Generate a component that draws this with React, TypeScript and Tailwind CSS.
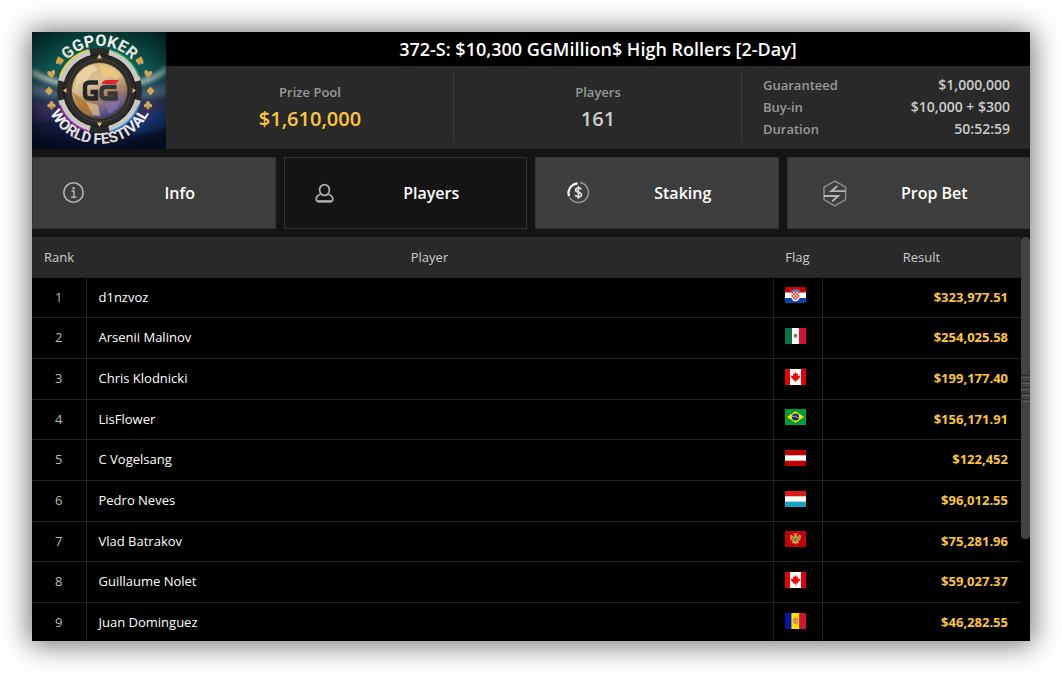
import type { ReactNode } from "react";

type FlagCode = "hr" | "mx" | "ca" | "br" | "at" | "lu" | "me" | "ad";

type Result = { rank: number; player: string; flag: FlagCode; country: string; prize: string };

const results: Result[] = [
  { rank: 1, player: "d1nzvoz", flag: "hr", country: "Croatia", prize: "$323,977.51" },
  { rank: 2, player: "Arsenii Malinov", flag: "mx", country: "Mexico", prize: "$254,025.58" },
  { rank: 3, player: "Chris Klodnicki", flag: "ca", country: "Canada", prize: "$199,177.40" },
  { rank: 4, player: "LisFlower", flag: "br", country: "Brazil", prize: "$156,171.91" },
  { rank: 5, player: "C Vogelsang", flag: "at", country: "Austria", prize: "$122,452" },
  { rank: 6, player: "Pedro Neves", flag: "lu", country: "Luxembourg", prize: "$96,012.55" },
  { rank: 7, player: "Vlad Batrakov", flag: "me", country: "Montenegro", prize: "$75,281.96" },
  { rank: 8, player: "Guillaume Nolet", flag: "ca", country: "Canada", prize: "$59,027.37" },
  { rank: 9, player: "Juan Dominguez", flag: "ad", country: "Andorra", prize: "$46,282.55" },
];

const details = [
  { label: "Guaranteed", value: "$1,000,000" },
  { label: "Buy-in", value: "$10,000 + $300" },
  { label: "Duration", value: "50:52:59" },
];

export default function App() {
  return (
    <main className="flex h-screen flex-col overflow-hidden bg-white p-8 font-['Open_Sans',sans-serif]">
      <div className="flex min-h-0 flex-1 flex-col bg-[#141414] shadow-[0_1px_26px_3px_rgba(0,0,0,0.55)]">
        <Header />
        <Tabs />
        <Results />
      </div>
    </main>
  );
}

function Header() {
  return (
    <header className="flex shrink-0">
      <FestivalLogo />
      <div className="flex flex-1 flex-col">
        <h1 className="bg-black text-center text-lg leading-[34px] font-semibold text-white">
          372-S: $10,300 GGMillion$ High Rollers [2-Day]
        </h1>
        <div className="grid flex-1 grid-cols-3 border-b border-[#222222] bg-[#292929] py-[6px]">
          <Stat label="Prize Pool">
            <span className="text-[#fdc53c]">$1,610,000</span>
          </Stat>
          <Stat label="Players">
            <span className="text-[#cccccc]">161</span>
          </Stat>
          <dl className="flex flex-col justify-center pr-5 pl-[21px] text-sm font-semibold">
            {details.map((item) => (
              <div key={item.label} className="flex justify-between leading-[22px]">
                <dt className="text-[13px] text-[#999999]">{item.label}</dt>
                <dd className="text-[#cccccc]">{item.value}</dd>
              </div>
            ))}
          </dl>
        </div>
      </div>
    </header>
  );
}

function Stat({ label, children }: { label: string; children: ReactNode }) {
  return (
    <div className="flex flex-col items-center justify-center border-r border-[#3a3a3a] pl-px font-semibold">
      <span className="text-[13px] leading-6 text-[#999999]">{label}</span>
      <span className="text-xl leading-[30px]">{children}</span>
    </div>
  );
}

/* Tabs */

function Tabs() {
  return (
    <nav className="grid shrink-0 grid-cols-4 gap-2 py-2">
      <Tab label="Info" icon={<InfoIcon />} />
      <Tab label="Players" icon={<PlayersIcon />} active />
      <Tab label="Staking" icon={<StakingIcon />} />
      <Tab label="Prop Bet" icon={<PropBetIcon />} />
    </nav>
  );
}

function Tab({ label, icon, active = false }: { label: string; icon: ReactNode; active?: boolean }) {
  return (
    <button
      type="button"
      aria-pressed={active}
      className={
        active
          ? "flex h-[72px] items-center border border-[#333333] bg-[#141414] pr-[10px] pl-[26px]"
          : "flex h-[72px] items-center border border-[#333333] bg-[#3d3d3d] pr-[10px] pl-[26px]"
      }
    >
      {icon}
      <span className="flex-1 text-center text-base font-semibold text-white">{label}</span>
    </button>
  );
}

function InfoIcon() {
  return (
    <svg viewBox="0 0 36 28" className="h-7 w-9 shrink-0" fill="none" stroke="#b5b5b5" aria-hidden>
      <circle cx="14.5" cy="13.5" r="9.7" strokeWidth="1.6" />
      <path d="M12.5 12H15V18M12 18.2H17.5" strokeWidth="1.4" />
      <circle cx="14.6" cy="9.2" r="1.2" fill="#b5b5b5" stroke="none" />
    </svg>
  );
}

function PlayersIcon() {
  return (
    <svg viewBox="0 0 36 28" className="h-7 w-9 shrink-0" fill="none" stroke="#b0b0b0" strokeWidth="1.7" aria-hidden>
      <ellipse cx="13.5" cy="11" rx="4.9" ry="5.4" />
      <path d="M9.6 15.3C6.8 16.3 5.2 18 5.2 20.3Q5.2 22.6 7.7 22.6H19.3Q21.8 22.6 21.8 20.3C21.8 18 20.2 16.3 17.4 15.3" />
      <path d="M7 22.3H20" strokeWidth="2.2" />
    </svg>
  );
}

function StakingIcon() {
  return (
    <svg viewBox="0 0 36 28" className="h-7 w-9 shrink-0" fill="none" aria-hidden>
      <path d="M18 3.6A10 10 0 1 1 7.8 18.6" stroke="#999999" strokeWidth="1.5" />
      <path d="M7 17.2A10 10 0 0 1 15.6 4.3" stroke="#ffffff" strokeWidth="2.2" />
      <path
        d="M19.2 10.4C18.6 9.2 17.6 8.9 16.4 8.9C14.8 8.9 13.6 9.7 13.6 11C13.6 12.4 14.8 12.9 16.4 13.3C18.1 13.7 19.4 14.2 19.4 15.7C19.4 17.2 18.1 17.9 16.5 17.9C15 17.9 13.7 17.3 13.2 16M16.4 7V19.7"
        stroke="#e0e0e0"
        strokeWidth="1.7"
      />
    </svg>
  );
}

function PropBetIcon() {
  return (
    <svg viewBox="0 0 36 28" className="h-7 w-9 shrink-0" fill="none" aria-hidden>
      <path d="M20.8 2L31.6 8.2V20.6L20.8 26.8L10 20.6V8.2Z" stroke="#8c8c8c" strokeWidth="1.5" />
      <path d="M31.6 12.1H17.4L23.4 7M10 17H24.2L18.2 22.2" stroke="#b4b4b4" strokeWidth="1.9" />
    </svg>
  );
}

/* Results table */

function Results() {
  return (
    <div className="flex min-h-0 flex-1 overflow-hidden bg-black">
      <table className="mb-auto flex-1 table-fixed border-collapse text-[13px]">
        <colgroup>
          <col className="w-[54px]" />
          <col />
          <col className="w-[49px]" />
          <col className="w-[199px]" />
        </colgroup>
        <thead>
          <tr className="h-10 bg-[#292929] text-[#cccccc]">
            <th scope="col" className="pt-px font-normal">Rank</th>
            <th scope="col" className="pt-px font-normal">Player</th>
            <th scope="col" className="pt-px font-normal">Flag</th>
            <th scope="col" className="pt-px font-normal">Result</th>
          </tr>
        </thead>
        <tbody>
          {results.map((row) => (
            <tr key={row.rank} className="h-[41px] border-y border-[#222222] nth-[3n+1]:h-[40px]">
              <td className="border-r border-[#222222] pt-px text-center text-[#bbbbbb]">{row.rank}</td>
              <td className="pt-px pl-3 font-medium text-white">{row.player}</td>
              <td className="border-x border-[#222222] pr-1 pb-1">
                <Flag code={row.flag} title={row.country} />
              </td>
              <td className="pt-px pr-[13px] text-right font-bold text-[#fdc53c]">{row.prize}</td>
            </tr>
          ))}
        </tbody>
      </table>
      <div className="w-[9px] shrink-0">
        <div className="flex h-[302px] flex-col items-stretch justify-center gap-[3px] rounded-[4px] bg-[#424242]">
          {[0, 1, 2, 3, 4].map((n) => (
            <div key={n} className="h-[3px] border-t border-b border-t-[#2c2c2c] border-b-[#5c5c5c]" />
          ))}
        </div>
      </div>
    </div>
  );
}

const flagArt: Record<FlagCode, ReactNode> = {
  hr: (
    <>
      <path fill="#c80000" d="M0 0H21V6H0Z" />
      <path fill="#ffffff" d="M0 5.5H21V11H0Z" />
      <path fill="#0b3fae" d="M0 11H21V16H0Z" />
      <path fill="#f4dede" d="M6.5 5H14.5V11Q14 14 10.5 14.5Q7 14 6.5 11Z" />
      <path
        fill="#d8342c"
        d="M6.5 5h1.6v1.6h-1.6zM9.7 5h1.6v1.6h-1.6zM12.9 5h1.6v1.6h-1.6zM8.1 6.6h1.6v1.6h-1.6zM11.3 6.6h1.6v1.6h-1.6zM6.5 8.2h1.6v1.6h-1.6zM9.7 8.2h1.6v1.6h-1.6zM12.9 8.2h1.6v1.6h-1.6zM8.1 9.8h1.6v1.6h-1.6zM11.3 9.8h1.6v1.6h-1.6zM9.7 11.4h1.6v1.6h-1.6z"
      />
      <path fill="#5c86b8" d="M6 2.5L7.6 3.3L9 2L10.5 2.8L12 2L13.4 3.3L15 2.5L14.3 5H6.7Z" />
    </>
  ),
  mx: (
    <>
      <path fill="#0a7049" d="M0 0H7V16H0Z" />
      <path fill="#ffffff" d="M7 0H14V16H7Z" />
      <path fill="#d0132b" d="M14 0H21V16H14Z" />
      <path fill="#8b6b45" d="M9 6.5Q10.5 5 12 6.5Q12.6 8 11.5 9.5H9.6Q8.4 8.5 9 6.5Z" />
      <path fill="none" stroke="#a9b98a" strokeWidth="0.7" d="M8.8 8.8Q10.5 11 12.2 8.8" />
    </>
  ),
  ca: (
    <>
      <path fill="#ffffff" d="M0 0H21V16H0Z" />
      <path fill="#e60000" d="M0 0H5V16H0ZM16 0H21V16H16Z" />
      <path
        fill="#f00000"
        d="M10.5 3L11.7 5L13 4.6L12.7 7L14.6 6.4L15 8.2L12.5 10.8L12.7 11.7L10.8 11.4V13.6H10.2V11.4L8.3 11.7L8.5 10.8L6 8.2L6.4 6.4L8.3 7L8 4.6L9.3 5Z"
      />
    </>
  ),
  br: (
    <>
      <path fill="#009b3a" d="M0 0H21V16H0Z" />
      <path fill="#fedf00" d="M10.5 2.2L19 8L10.5 13.8L2 8Z" />
      <circle fill="#1b2f7a" cx="10.5" cy="8" r="3.6" />
      <path fill="none" stroke="#dfe6ee" strokeWidth="0.7" d="M7 7.3Q10.8 6.4 13.8 9.2" />
    </>
  ),
  at: (
    <>
      <path fill="#c00000" d="M0 0H21V16H0Z" />
      <path fill="#ffffff" d="M0 5.3H21V10.7H0Z" />
    </>
  ),
  lu: (
    <>
      <path fill="#dc1c13" d="M0 0H21V6H0Z" />
      <path fill="#ffffff" d="M0 5.3H21V11H0Z" />
      <path fill="#17a2c4" d="M0 10.6H21V16H0Z" />
    </>
  ),
  me: (
    <>
      <path fill="#c40008" d="M0 0H21V16H0Z" />
      <path
        fill="#cf9b3a"
        d="M9.4 4.6L8 2.6L9.8 2.2L10.5 3.2L11.2 2.2L13 2.6L11.6 4.6L12.4 6L14.6 3.6L16 4.6L15.6 8.4L13.4 10.3L14.2 12.4L12 12L10.5 13.8L9 12L6.8 12.4L7.6 10.3L5.4 8.4L5 4.6L6.4 3.6L8.6 6Z"
      />
      <path fill="#4b7c86" d="M9.3 6.8H11.7V9.4L10.5 10.4L9.3 9.4Z" />
      <path fill="none" stroke="#a33a10" strokeWidth="0.6" d="M6.8 5.6L8.4 9.5M14.2 5.6L12.6 9.5" />
    </>
  ),
  ad: (
    <>
      <path fill="#0018a8" d="M0 0H7V16H0Z" />
      <path fill="#fedf00" d="M6.4 0H14.6V16H6.4Z" />
      <path fill="#d0103a" d="M14.4 0H21V16H14.4Z" />
      <path fill="#d08a4a" d="M8 5.4Q10.5 4 13 5.4V9.4Q12.6 11 10.5 11.6Q8.4 11 8 9.4Z" />
      <path fill="#e0b35c" d="M9 6.4H10.4V8H9ZM10.8 8.3H12V9.8H10.8Z" />
    </>
  ),
};

function Flag({ code, title }: { code: FlagCode; title: string }) {
  return (
    <svg viewBox="0 0 21 16" role="img" aria-label={title} className="mx-auto block h-4 w-[21px]">
      {flagArt[code]}
    </svg>
  );
}

/* Festival logo: poker chip around a golden globe */

const suits = {
  spade: "M0 -4.4C1.6 -2 4 -1 4 1.2C4 3 1.8 3.4 0.8 2.2L1.6 4.2H-1.6L-0.8 2.2C-1.8 3.4 -4 3 -4 1.2C-4 -1 -1.6 -2 0 -4.4Z",
  heart: "M0 4.2C-1.6 2 -4 0.8 -4 -1.6C-4 -4 -1 -4.2 0 -2C1 -4.2 4 -4 4 -1.6C4 0.8 1.6 2 0 4.2Z",
  diamond: "M0 -4.6L4 0L0 4.6L-4 0Z",
  club: "M-1.5 4.2L-0.6 1.8C-1.6 3.2 -4.2 2.6 -4.2 0.5C-4.2 -1.2 -2.6 -1.6 -1.8 -1.2C-2.8 -4.8 2.8 -4.8 1.8 -1.2C2.6 -1.6 4.2 -1.2 4.2 0.5C4.2 2.6 1.6 3.2 0.6 1.8L1.5 4.2Z",
};

function FestivalLogo() {
  return (
    <svg viewBox="0 0 134 117" className="h-[117px] w-[134px] shrink-0" role="img" aria-label="GGPoker World Festival">
      <defs>
        <linearGradient id="sky" x1="0" y1="0" x2="0" y2="1">
          <stop offset="0" stopColor="#064a3d" />
          <stop offset="0.3" stopColor="#0d5a58" />
          <stop offset="0.5" stopColor="#29435a" />
          <stop offset="0.75" stopColor="#1d2450" />
          <stop offset="1" stopColor="#050d28" />
        </linearGradient>
        <radialGradient id="edge" cx="0.5" cy="0.5" r="0.75">
          <stop offset="0.5" stopColor="#000000" stopOpacity="0" />
          <stop offset="1" stopColor="#000814" stopOpacity="0.75" />
        </radialGradient>
        <linearGradient id="globe" x1="0.3" y1="0" x2="0.75" y2="1">
          <stop offset="0" stopColor="#d8b777" />
          <stop offset="0.35" stopColor="#d9c09a" />
          <stop offset="0.6" stopColor="#a98464" />
          <stop offset="0.8" stopColor="#6d5f8c" />
          <stop offset="1" stopColor="#27306e" />
        </linearGradient>
        <linearGradient id="lettering" x1="0" y1="0" x2="0" y2="1">
          <stop offset="0" stopColor="#ffffff" />
          <stop offset="1" stopColor="#dcd6c2" />
        </linearGradient>
        <filter id="glow" x="-50%" y="-50%" width="200%" height="200%">
          <feGaussianBlur stdDeviation="2" />
        </filter>
        <path id="arc-top" d="M23.5 58A44 44 0 0 1 111.5 58" />
        <path id="arc-bottom" d="M12.5 57A55 55 0 0 0 122.5 57" />
      </defs>

      <rect width="134" height="117" fill="url(#sky)" />
      <g filter="url(#glow)">
        <path d="M0 37Q16 46 30 49V54Q12 50 0 43Z" fill="#d9e6cf" opacity="0.8" />
        <path d="M134 34Q122 45 104 49V54Q122 50 134 41Z" fill="#c5e0d4" opacity="0.8" />
        <path d="M0 52L28 60V66L0 64Z" fill="#758397" opacity="0.5" />
        <path d="M134 52L106 60V66L134 64Z" fill="#667f93" opacity="0.5" />
        <path d="M0 70H134V88H0Z" fill="#482f64" opacity="0.55" />
        <path d="M96 88L134 74V96L100 104Z" fill="#133e8c" opacity="0.7" />
      </g>
      <rect width="134" height="117" fill="url(#edge)" />

      <circle cx="67.5" cy="58.5" r="42.5" fill="#292929" />
      {/* light wedges between the four dark blocks of the rim */}
      <circle
        cx="67.5"
        cy="58.5"
        r="39"
        fill="none"
        stroke="#c9c7c2"
        strokeWidth="7"
        pathLength="360"
        strokeDasharray="62 28"
        strokeDashoffset="-14"
      />
      <g fill="none" strokeWidth="1.6">
        <path d="M28 44A42 42 0 0 1 56 18" stroke="#e7d62b" />
        <path d="M79 18A42 42 0 0 1 107 44" stroke="#179a4a" />
        <path d="M28 73A42 42 0 0 0 56 99" stroke="#a12ac0" />
        <path d="M79 99A42 42 0 0 0 107 73" stroke="#2b8be6" />
      </g>
      <circle cx="67.5" cy="58.5" r="36" fill="#2b2a28" stroke="#151513" strokeWidth="1" />
      <circle cx="67.5" cy="58.5" r="31" fill="none" stroke="#454441" strokeWidth="1" />
      <circle cx="67.5" cy="58.5" r="28" fill="url(#globe)" stroke="#54431f" strokeWidth="1" />
      <g opacity="0.7">
        <path d="M46 43Q52 34 61 33L66 37L59 42L56 48L48 51L43 56Z" fill="#efdcae" />
        <path d="M68 33Q81 34 89 45L84 48L78 43L72 46L69 40Z" fill="#f2cd76" />
        <path d="M41 60L50 67L60 72L62 84L55 83Q43 76 41 60Z" fill="#b5752a" />
        <path d="M54 70L66 73L68 84L61 83Z" fill="#e6c48b" />
        <path d="M73 71L88 69L86 76L77 82Z" fill="#8b77a8" />
      </g>
      <path d="M67.5 22L70 26.5H65ZM67.5 95L70 90.5H65ZM31 58.5L34.5 56V61ZM104 58.5L100.5 56V61Z" fill="#e2bd70" />

      {/* GG monogram */}
      <g fill="none" strokeWidth="4.4">
        <path d="M66 50.5H57.5Q53 50.5 53 55V62Q53 66.5 57.5 66.5H64V60H58.5" stroke="#252629" />
        <path d="M84.5 55H73.5Q69.5 55 69.5 59V62.5Q69.5 66.5 73.5 66.5H83.5V61.5H75.5" stroke="#353638" />
      </g>
      <path d="M73.5 48H87L83.5 52H69.5Q70.5 48.8 73.5 48Z" fill="#e3222a" />

      <g fill="#d3a54c">
        <path d={suits.spade} transform="translate(27.5 28.5) rotate(-18)" />
        <path d={suits.heart} transform="translate(19.5 42) rotate(-12)" />
        <path d={suits.diamond} transform="translate(17 59)" />
        <path d={suits.club} transform="translate(19.5 73)" />
        <path d={suits.spade} transform="translate(108 28.5) rotate(18)" />
        <path d={suits.heart} transform="translate(116 42) rotate(12)" />
        <path d={suits.diamond} transform="translate(118.5 59)" />
        <path d={suits.club} transform="translate(116 73)" />
      </g>

      <g fill="url(#lettering)" className="font-['Roboto',sans-serif] font-bold" textAnchor="middle">
        <text fontSize="16">
          <textPath href="#arc-top" startOffset="50%">GGPOKER</textPath>
        </text>
        <text fontSize="15">
          <textPath href="#arc-bottom" startOffset="50%">WORLD FESTIVAL</textPath>
        </text>
      </g>
    </svg>
  );
}
